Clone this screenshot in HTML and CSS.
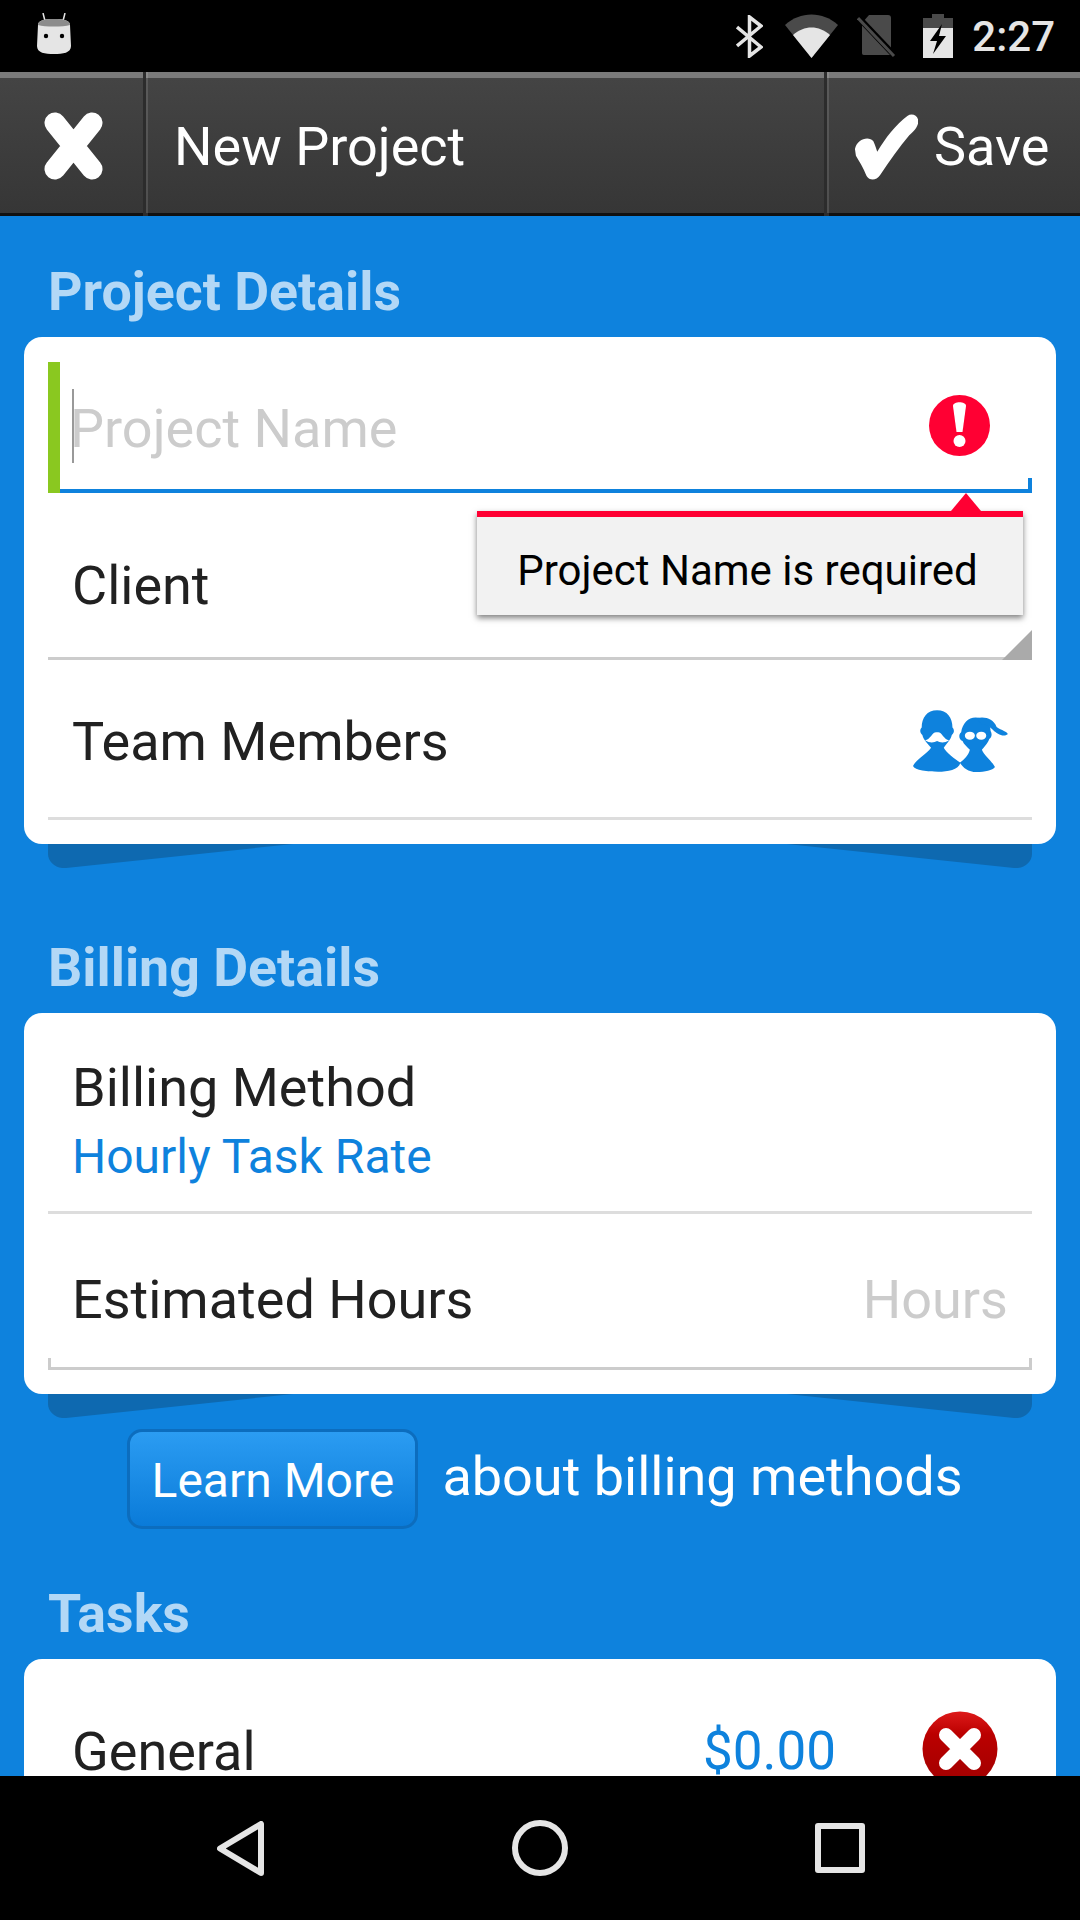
FILE: index.html
```html
<!doctype html>
<html lang="en-us">
  <head>
    <meta charset="utf-8">
    <title>New Project</title>
    <link rel="stylesheet" href="styles.css">
  </head>
  <body>
    <div class="screen">
      <div class="status-bar">
        <svg class="robot" viewBox="0 0 34 41">
          <path d="M8 8 L6 0 M26 8 L28 0" stroke="#e5e5e5" stroke-width="1.5"/>
          <path d="M1 12 C1 7 8 6 17 6 C26 6 33 7 33 12 L34 33 C34 40 26 41 17 41 C8 41 0 40 0 33 Z" fill="#e5e5e5"/>
          <path d="M1 12 C1 7 8 6 17 6 C26 6 33 7 33 12 C26 14 8 14 1 12 Z" fill="#8c8c8c"/>
          <circle cx="9" cy="23" r="2.2" fill="#000"/>
          <circle cx="25" cy="23" r="2.2" fill="#000"/>
        </svg>
        <div class="status-icons">
          <svg class="bluetooth" viewBox="0 0 27 43">
            <path d="M1 12 L25 32 L13.500 41 V2 L25 11 L1 31" fill="none" stroke="#e5e5e5" stroke-width="3.500"/>
          </svg>
          <svg class="wifi" viewBox="0 0 53 44">
            <path d="M0 11 C15 -3 38 -3 53 11 L26.500 44 Z" fill="#4a4a4a"/>
            <path d="M8 21 C19 11 34 11 45 21 L26.500 44 Z" fill="#e5e5e5"/>
          </svg>
          <svg class="sim" viewBox="0 0 39 42">
            <path d="M12 0 H31 C33 0 34 1 34 3 V40 H7 C5 40 5 39 5 37 V8 Z" fill="#4a4a4a"/>
            <path d="M1 2 L38 41" stroke="#000" stroke-width="6"/>
            <path d="M1 3 L37 41" stroke="#4a4a4a" stroke-width="3"/>
          </svg>
          <svg class="battery" viewBox="0 0 30 44">
            <path d="M9 0 H21 V4 H30 V14 H0 V4 H9 Z" fill="#4a4a4a"/>
            <path d="M0 14 H30 V44 H0 Z" fill="#e5e5e5"/>
            <path d="M19 10 L7 27 H14 L10 40 L23 22 H16 Z" fill="#000"/>
          </svg>
          <span class="clock">2:27</span>
        </div>
      </div>

      <div class="action-bar">
        <div class="action-close">
          <svg class="icon-x" viewBox="0 0 59 68">
            <path d="M11 11 L48 57 M48 11 L11 57" stroke="#fff" stroke-width="21" stroke-linecap="round"/>
          </svg>
        </div>
        <div class="action-title">New Project</div>
        <div class="action-save">
          <svg class="icon-check" viewBox="0 0 67 70">
            <path d="M2 38 C4 28 16 24 21 30 C23 34 24 38 25 41 C33 27 45 12 56 4 C62 0 69 5 67 12 C65 18 62 20 58 24 C48 36 38 50 28 65 C24 71 17 71 14 66 C11 58 6 50 3 45 Z" fill="#fff"/>
          </svg>
          <span>Save</span>
        </div>
      </div>

      <div class="content">
        <h2 class="section-title">Project Details</h2>
        <div class="card">
          <div class="field">
            <span class="caret"></span>
            <span class="placeholder">Project Name</span>
            <svg class="icon-error" viewBox="0 0 61 61">
              <circle cx="30.500" cy="30.500" r="30.500" fill="#ff0033"/>
              <path d="M24 11 C24 6 37 6 37 11 L33.500 37 H27.500 Z" fill="#fff"/>
              <circle cx="30.500" cy="46" r="6" fill="#fff"/>
            </svg>
          </div>
          <div class="row row-client">
            <span>Client</span>
            <svg class="corner" viewBox="0 0 30 30"><path d="M30 0 V30 H0 Z" fill="#aaa"/></svg>
          </div>
          <div class="row row-team">
            <span>Team Members</span>
            <svg class="icon-team" viewBox="0 0 284 187">
              <g fill="#0e82dd">
                <path d="M187 22 C214 22 232 40 232 62 C238 72 234 82 228 86 C222 102 212 110 206 118 C212 135 235 150 245 170 C238 180 215 185 190 185 C165 185 150 172 140 157 C152 148 166 135 170 118 C162 110 152 102 148 92 C136 86 136 72 144 66 C148 40 165 22 187 22 Z"/>
                <path d="M190 24 C215 18 240 25 250 50 C265 60 285 65 283 72 C270 82 250 70 240 60 C230 50 220 42 205 42 Z"/>
                <path d="M72 0 C102 0 118 22 118 52 C124 58 124 68 116 74 C112 90 100 100 92 112 C100 128 125 145 142 157 C135 178 105 184 75 184 C45 184 5 180 0 167 C8 148 40 132 54 112 C44 100 32 90 28 74 C20 68 20 58 26 52 C26 22 42 0 72 0 Z"/>
              </g>
              <path d="M36 90 C54 86 58 62 72 66 C86 62 90 86 108 90 C92 100 80 96 72 92 C64 96 52 100 36 90 Z" fill="#fff"/>
              <ellipse cx="170" cy="76" rx="15" ry="12" fill="#fff"/>
              <ellipse cx="204" cy="76" rx="15" ry="12" fill="#fff"/>
            </svg>
          </div>

          <div class="tooltip">
            <svg class="tooltip-arrow" viewBox="0 0 30 18"><path d="M15 0 L30 18 H0 Z" fill="#ff0033"/></svg>
            Project Name is required
          </div>
        </div>
        <div class="ribbon">
          <svg viewBox="0 0 245 24"><path d="M0 0 H245 L18 24 C8 25 0 18 0 10 Z" fill="#0e69b0"/></svg>
          <svg viewBox="0 0 245 24"><path d="M245 0 H0 L227 24 C237 25 245 18 245 10 Z" fill="#0e69b0"/></svg>
        </div>

        <h2 class="section-title section-billing">Billing Details</h2>
        <div class="card card-billing">
          <div class="row row-method">
            <span>Billing Method</span>
            <span class="row-value">Hourly Task Rate</span>
          </div>
          <div class="row row-hours">
            <span>Estimated Hours</span>
            <span class="placeholder">Hours</span>
          </div>
        </div>
        <div class="ribbon">
          <svg viewBox="0 0 245 24"><path d="M0 0 H245 L18 24 C8 25 0 18 0 10 Z" fill="#0e69b0"/></svg>
          <svg viewBox="0 0 245 24"><path d="M245 0 H0 L227 24 C237 25 245 18 245 10 Z" fill="#0e69b0"/></svg>
        </div>

        <div class="learn-more">
          <button class="learn-button">Learn More</button>
          <span class="learn-text">about billing methods</span>
        </div>

        <h2 class="section-title section-tasks">Tasks</h2>
        <div class="card card-tasks">
          <div class="task">
            <span class="task-name">General</span>
            <span class="task-amount">$0.00</span>
            <svg class="icon-remove" viewBox="0 0 76 76">
              <defs>
                <linearGradient id="remove-fill" x1="0" y1="0" x2="0" y2="1">
                  <stop offset="0" stop-color="#dd1a1a"/>
                  <stop offset="0.3" stop-color="#bb0000"/>
                  <stop offset="1" stop-color="#a00000"/>
                </linearGradient>
              </defs>
              <circle cx="38" cy="38" r="37.500" fill="url(#remove-fill)"/>
              <path d="M24 24 L52 52 M52 24 L24 52" stroke="#fff" stroke-width="14" stroke-linecap="round"/>
            </svg>
          </div>
        </div>
      </div>

      <div class="nav-bar">
        <svg class="nav-back" viewBox="0 0 47 55">
          <path d="M44 3 V52 L3 27.500 Z" fill="none" stroke="#e5e5e5" stroke-width="6" stroke-linejoin="round"/>
        </svg>
        <span class="nav-home"></span>
        <span class="nav-recent"></span>
      </div>
    </div>
  </body>
</html>
```

FILE: styles.css
```css
* {
  box-sizing: border-box;
}

body {
  margin: 0;
  font-family: Roboto, sans-serif;
}

.screen {
  width: 1080px;
  height: 1920px;
  display: flex;
  flex-direction: column;
  background: #0e82dd;
  overflow: hidden;
}

/* status bar */
.status-bar {
  height: 72px;
  flex: none;
  display: flex;
  justify-content: space-between;
  align-items: center;
  padding: 0 25px 0 37px;
  background: #000;
}

.robot {
  width: 34px;
  height: 41px;
  margin-top: -5px;
}

.status-icons {
  display: flex;
  align-items: center;
}

.bluetooth {
  width: 27px;
  height: 43px;
}

.wifi {
  width: 53px;
  height: 44px;
  margin-left: 22px;
}

.sim {
  width: 39px;
  height: 42px;
  margin-left: 19px;
}

.battery {
  width: 30px;
  height: 44px;
  margin-left: 27px;
}

.clock {
  margin-left: 19px;
  font-size: 42px;
  font-weight: 500;
  color: #e5e5e5;
}

/* action bar */
.action-bar {
  height: 144px;
  flex: none;
  display: flex;
  border-top: 6px solid #7a7a7a;
  border-bottom: 3px solid #111;
  background: linear-gradient(#444, #363636);
  color: #fff;
  font-size: 54px;
}

.action-close,
.action-save {
  position: relative;
  display: flex;
  align-items: center;
}

.action-close::after,
.action-save::after {
  content: "";
  position: absolute;
  top: -6px;
  bottom: -3px;
  width: 3px;
  background: #2c2c2c;
  box-shadow: 2px 0 0 rgba(255, 255, 255, 0.12);
}

.action-close {
  width: 146px;
  padding-left: 44px;
}

.action-close::after {
  right: 0;
}

.icon-x {
  width: 59px;
  height: 68px;
}

.action-title {
  flex: 1;
  display: flex;
  align-items: center;
  padding: 2px 0 0 28px;
}

.action-save {
  width: 256px;
  padding-left: 29px;
}

.action-save::after {
  left: 0;
}

.icon-check {
  width: 65px;
  height: 68px;
}

.action-save span {
  margin-left: 16px;
  padding-top: 2px;
}

/* content */
.content {
  flex: 1;
  min-height: 0;
  overflow: hidden;
}

.section-title {
  margin: 0;
  height: 121px;
  padding: 48px 48px 0;
  font-size: 53.7px;
  line-height: 56px;
  font-weight: 700;
  color: #b3d8f6;
}

.section-billing {
  margin-top: 24px;
}

.section-tasks {
  margin-top: 9px;
}

.card {
  position: relative;
  margin: 0 24px;
  padding: 25px 24px 24px;
  border-radius: 18px;
  background: #fff;
  color: #212121;
  font-size: 54px;
}

.card-billing {
  padding: 0 24px 24px;
}

.card-tasks {
  padding: 0 24px;
}

.field {
  height: 131px;
  display: flex;
  align-items: center;
  position: relative;
  padding: 0 24px;
  border-bottom: 4px solid #0e82dd;
}

.field::before {
  content: "";
  position: absolute;
  left: 0;
  top: 0;
  bottom: -4px;
  width: 12px;
  background: #8ac820;
}

.field::after {
  content: "";
  position: absolute;
  right: 0;
  bottom: 0;
  width: 4px;
  height: 11px;
  background: #0e82dd;
}

.caret {
  width: 2px;
  height: 74px;
  background: #999;
}

.field .placeholder {
  margin-left: -4px;
  padding-top: 6px;
}

.placeholder {
  color: #ccc;
}

.icon-error {
  width: 61px;
  height: 61px;
  margin-left: auto;
  margin-right: 18px;
}

.row {
  display: flex;
  align-items: center;
  justify-content: space-between;
  padding: 0 24px;
  border-bottom: 3px solid #ccc;
}

.row-client {
  height: 167px;
  padding-top: 21px;
  position: relative;
}

.corner {
  position: absolute;
  right: 0;
  bottom: -3px;
  width: 30px;
  height: 30px;
}

.row-team {
  height: 160px;
  padding-top: 6px;
  border-bottom-color: #ddd;
}

.icon-team {
  width: 95px;
  height: 63px;
}

.row-method {
  height: 201px;
  padding-top: 16px;
  flex-direction: column;
  align-items: flex-start;
  justify-content: center;
  border-bottom-color: #ddd;
}

.row-value {
  margin-top: 9px;
  font-size: 48px;
  color: #0e82dd;
}

.row-hours {
  height: 156px;
  padding-top: 18px;
  position: relative;
}

.row-hours::before,
.row-hours::after {
  content: "";
  position: absolute;
  bottom: -3px;
  width: 3px;
  height: 12px;
  background: #ccc;
}

.row-hours::before {
  left: 0;
}

.row-hours::after {
  right: 0;
}

.tooltip {
  position: absolute;
  left: 453px;
  top: 174px;
  width: 546px;
  height: 104px;
  padding: 8px 5px 0 0;
  display: flex;
  align-items: center;
  justify-content: center;
  border-top: 6px solid #ff0033;
  background: #f2f2f2;
  box-shadow: 0 3px 6px rgba(0, 0, 0, 0.5);
  color: #000;
  font-size: 42px;
}

.tooltip-arrow {
  position: absolute;
  right: 42px;
  top: -24px;
  width: 30px;
  height: 18px;
}

.ribbon {
  height: 24px;
  margin: 0 48px;
  display: flex;
  justify-content: space-between;
}

.ribbon svg {
  width: 245px;
  height: 24px;
}

.learn-more {
  margin-top: 11px;
  padding-left: 10px;
  display: flex;
  align-items: center;
  justify-content: center;
  gap: 24px;
  color: #fff;
  font-size: 54px;
}

.learn-text {
  padding-bottom: 5px;
}

.learn-button {
  width: 291px;
  height: 100px;
  padding: 3px 0 0;
  border: 3px solid #0c6dbe;
  border-radius: 15px;
  background: linear-gradient(#2b9cf2, #0a7bd9);
  color: #fff;
  font-family: inherit;
  font-size: 48px;
}

.task {
  height: 180px;
  display: flex;
  align-items: center;
  padding: 4px 24px 0;
}

.task-amount {
  margin-left: auto;
  font-size: 53px;
  color: #0e82dd;
}

.icon-remove {
  width: 76px;
  height: 76px;
  margin-left: 86px;
  margin-right: 10px;
  margin-top: -4px;
}

/* nav bar */
.nav-bar {
  height: 144px;
  flex: none;
  display: grid;
  grid-template-columns: repeat(3, 300px);
  justify-content: center;
  justify-items: center;
  align-items: center;
  background: #000;
}

.nav-back {
  width: 47px;
  height: 55px;
}

.nav-home {
  width: 56px;
  height: 56px;
  border: 6px solid #e5e5e5;
  border-radius: 50%;
}

.nav-recent {
  width: 50px;
  height: 50px;
  border: 6px solid #e5e5e5;
  border-radius: 3px;
}
```
